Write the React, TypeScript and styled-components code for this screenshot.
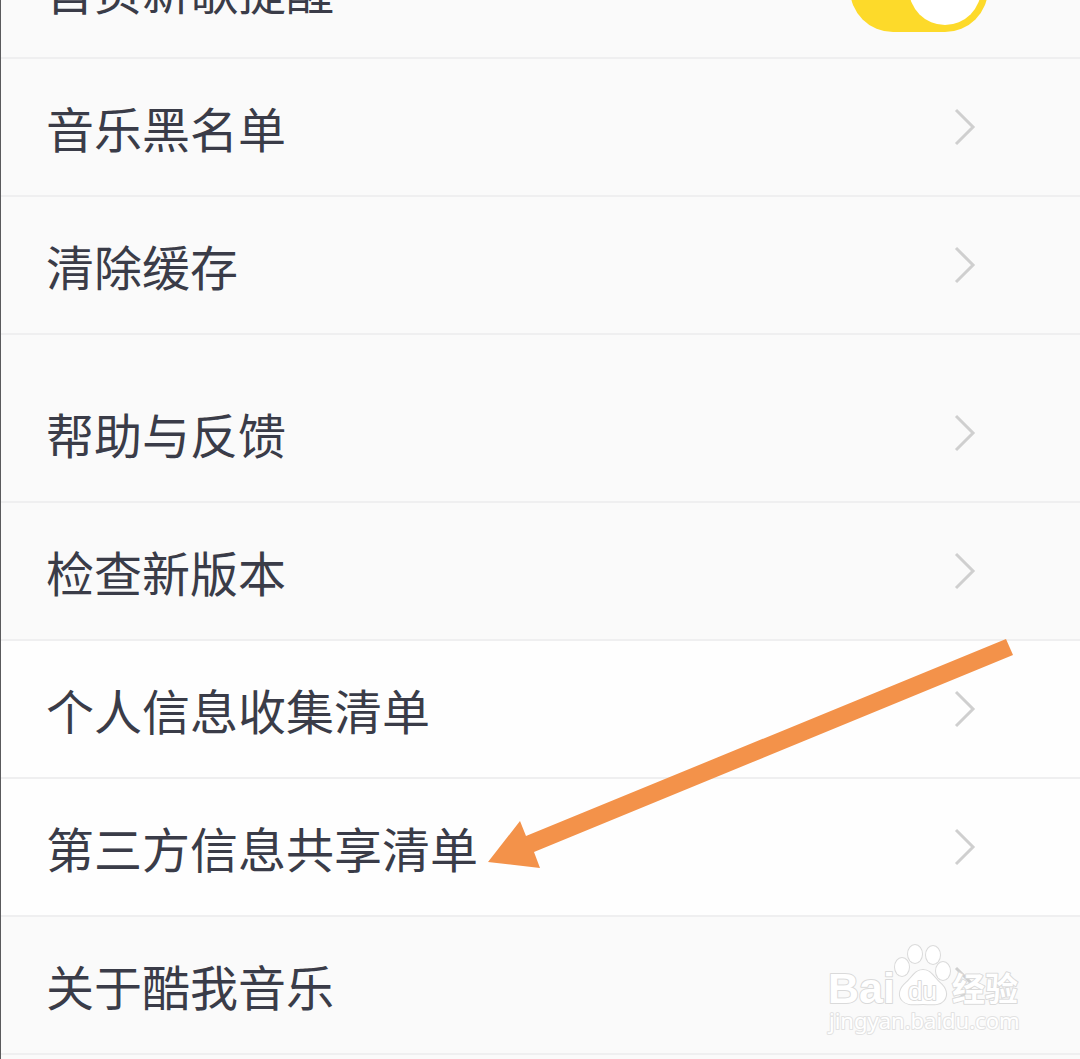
import React from "react";
import styled, { createGlobalStyle } from "styled-components";

const GlobalStyle = createGlobalStyle`
  * { box-sizing: border-box; }
  html { background: #fafafa; overflow: hidden; }
  body {
    margin: 0;
    color: #3a3c48;
    font-family: "Noto Sans CJK SC", sans-serif;
  }
`;

const Page = styled.main`
  position: relative;
  min-height: 100vh;
  overflow: hidden;
  border-left: 1px solid #5a5a5c;
`;

/* The list is scrolled, so its first row is partly above the window. */
const Settings = styled.div`
  margin-top: -79px;
`;

const Group = styled.ul`
  margin: 0;
  padding: 0;
  list-style: none;

  & + & {
    padding-top: 30px;
  }
`;

const Item = styled.li<{ $light?: boolean }>`
  border-bottom: 2px solid #efeff0;
  background: ${(p) => (p.$light ? "#fefefe" : "#fafafa")};
`;

const rowStyles = `
  display: flex;
  align-items: center;
  justify-content: space-between;
  width: 100%;
  height: 136px;
  padding: 0 104px 0 45px;
  color: inherit;
  font-family: inherit;
  font-size: 48px;
  line-height: 72px;
`;

const RowButton = styled.button`
  ${rowStyles}
  border: 0;
  background: none;
  text-align: left;
  cursor: pointer;
`;

const RowLabel = styled.label`
  ${rowStyles}
  padding-right: 92px;
  cursor: pointer;
`;

const Switch = styled.input`
  appearance: none;
  display: flex;
  align-items: center;
  width: 138px;
  height: 86px;
  margin: 0;
  padding: 0 7px;
  border-radius: 43px;
  background: #dddddf;
  cursor: pointer;

  &::before {
    content: "";
    width: 72px;
    height: 72px;
    border-radius: 50%;
    background: #ffffff;
  }

  &:checked {
    justify-content: flex-end;
    background: #fdda2a;
  }
`;

const ChevronIcon = styled.svg`
  flex: none;
  width: 22px;
  height: 38px;
  fill: none;
  stroke: #cfcfcf;
  stroke-width: 3;
`;

const Arrow = styled.svg`
  position: absolute;
  top: 638px;
  left: 487px;
  width: 526px;
  height: 232px;
  fill: #f3924a;
  pointer-events: none;
`;

const Watermark = styled.svg`
  position: absolute;
  top: 940px;
  left: 822px;
  width: 204px;
  height: 100px;
  fill: #ffffff;
  stroke: #dadada;
  stroke-width: 2;
  stroke-linejoin: round;
  paint-order: stroke;
  pointer-events: none;
`;

const Latin = styled.text`
  font: bold 43px "Liberation Sans", sans-serif;
`;

const Du = styled.text`
  font: 26px "Liberation Sans", sans-serif;
`;

const Hanzi = styled.text`
  font: 700 33px "Noto Sans CJK SC", sans-serif;
`;

const Address = styled.text`
  font: 22px "Noto Sans", sans-serif;
  stroke: #e2e2e2;
`;

type Entry = { label: string; light?: boolean };

const general: Entry[] = [{ label: "音乐黑名单" }, { label: "清除缓存" }];

const about: Entry[] = [
  { label: "帮助与反馈" },
  { label: "检查新版本" },
  { label: "个人信息收集清单", light: true },
  { label: "第三方信息共享清单", light: true },
  { label: "关于酷我音乐" },
];

function LinkRow({ label, light }: Entry) {
  return (
    <Item $light={light}>
      <RowButton type="button">
        {label}
        <ChevronIcon viewBox="0 0 22 38" aria-hidden="true">
          <path d="M2 2 19 19 2 36" />
        </ChevronIcon>
      </RowButton>
    </Item>
  );
}

export default function App() {
  return (
    <>
      <GlobalStyle />
      <Page>
        <Settings>
          <Group>
            <Item>
              <RowLabel htmlFor="new-song">
                首页新歌提醒
                <Switch id="new-song" type="checkbox" defaultChecked />
              </RowLabel>
            </Item>
            {general.map((entry) => (
              <LinkRow key={entry.label} {...entry} />
            ))}
          </Group>
          <Group>
            {about.map((entry) => (
              <LinkRow key={entry.label} {...entry} />
            ))}
          </Group>
        </Settings>

        <Arrow viewBox="0 0 526 232" aria-hidden="true">
          <path d="M0 224 32 183 38 198 518 1 525 17 46 214 52 230Z" />
        </Arrow>

        <Watermark viewBox="0 0 204 100">
          <Latin x="5" y="63">Bai</Latin>
          <ellipse cx="79" cy="27" rx="7" ry="9" />
          <ellipse cx="92" cy="14" rx="7" ry="9" />
          <ellipse cx="110" cy="15" rx="7" ry="9" />
          <ellipse cx="120" cy="31" rx="7" ry="9" />
          <path d="M100 30C92 30 89 38 83 43C77 48 75 55 79 60C84 66 92 64 100 64C108 64 116 66 121 60C125 55 123 48 117 43C111 38 108 30 100 30Z" />
          <Du x="85" y="60">du</Du>
          <Hanzi x="129" y="61">经验</Hanzi>
          <Address x="6" y="89">jingyan.baidu.com</Address>
        </Watermark>
      </Page>
    </>
  );
}
